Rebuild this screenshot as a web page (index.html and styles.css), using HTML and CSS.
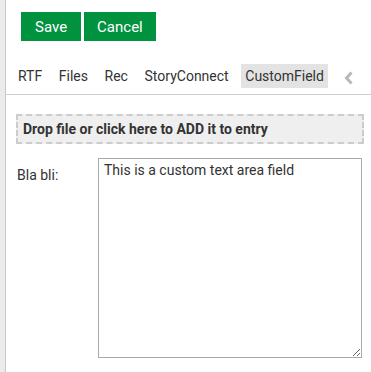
FILE: index.html
```html
<!DOCTYPE html>
<html>
<head>
<meta charset="utf-8">
<link rel="stylesheet" href="styles.css">
</head>
<body>
<div class="page">
  <div class="sidebar"></div>
  <div class="content">
    <div class="actions">
      <button class="btn">Save</button>
      <button class="btn">Cancel</button>
    </div>
    <div class="tabs">
      <span class="tab">RTF</span>
      <span class="tab">Files</span>
      <span class="tab">Rec</span>
      <span class="tab">StoryConnect</span>
      <span class="tab active">CustomField</span>
      <span class="chev"><svg width="10" height="14" viewBox="0 0 10 14"><path d="M7.5 1.5 L2.5 7 L7.5 12.5" fill="none" stroke="#b8b8b8" stroke-width="3"/></svg></span>
    </div>
    <div class="body">
      <div class="drop">Drop file or click here to ADD it to entry</div>
      <div class="field">
        <label class="label">Bla bli:</label>
        <textarea class="area">This is a custom text area field</textarea>
      </div>
    </div>
  </div>
</div>
</body>
</html>
```
FILE: styles.css
```css
html, body {
  margin: 0;
  padding: 0;
  background: #fff;
  font-family: Roboto, "Liberation Sans", sans-serif;
  color: #333;
}
.page {
  display: flex;
  min-height: 372px;
}
.sidebar {
  width: 5px;
  background: #ebebeb;
  border-right: 1px solid #c8c8c8;
  flex: none;
}
.content {
  flex: 1;
  min-width: 0;
}
.actions {
  display: flex;
  gap: 3px;
  padding: 12px 0 0 15px;
}
.btn {
  height: 29px;
  border: 0;
  background: #00923f;
  color: #fff;
  font-family: Roboto, "Liberation Sans", sans-serif;
  font-size: 15px;
  padding: 0 14px;
  margin: 0;
}
.btn + .btn {
  padding: 0 13px;
}
.tabs {
  display: flex;
  align-items: center;
  gap: 8.6px;
  margin-top: 23px;
  padding: 0 0 6px 8px;
  border-bottom: 1px solid #cfcfcf;
}
.tab {
  font-size: 14px;
  line-height: 16px;
  padding: 4px 4px;
  color: #333;
}
.tab.active {
  background: #e3e3e3;
}
.chev {
  display: flex;
  margin-left: 7px;
  padding-top: 4px;
}
.body {
  padding: 19px 7px 0 10px;
}
.drop {
  border: 2px dashed #cccccc;
  background: #efefef;
  font-size: 14px;
  font-weight: bold;
  line-height: 16px;
  padding: 5px 5px;
  color: #333;
}
.field {
  display: flex;
  margin-top: 14px;
}
.label {
  width: 81px;
  flex: none;
  font-size: 14px;
  padding-top: 9px;
  padding-left: 1px;
  color: #333;
}
.area {
  width: 264px;
  height: 200px;
  box-sizing: border-box;
  margin: 0;
  border: 1px solid #a9a9a9;
  font-family: Roboto, "Liberation Sans", sans-serif;
  font-size: 14px;
  color: #333;
  padding: 3px 5px;
  resize: both;
}
```
